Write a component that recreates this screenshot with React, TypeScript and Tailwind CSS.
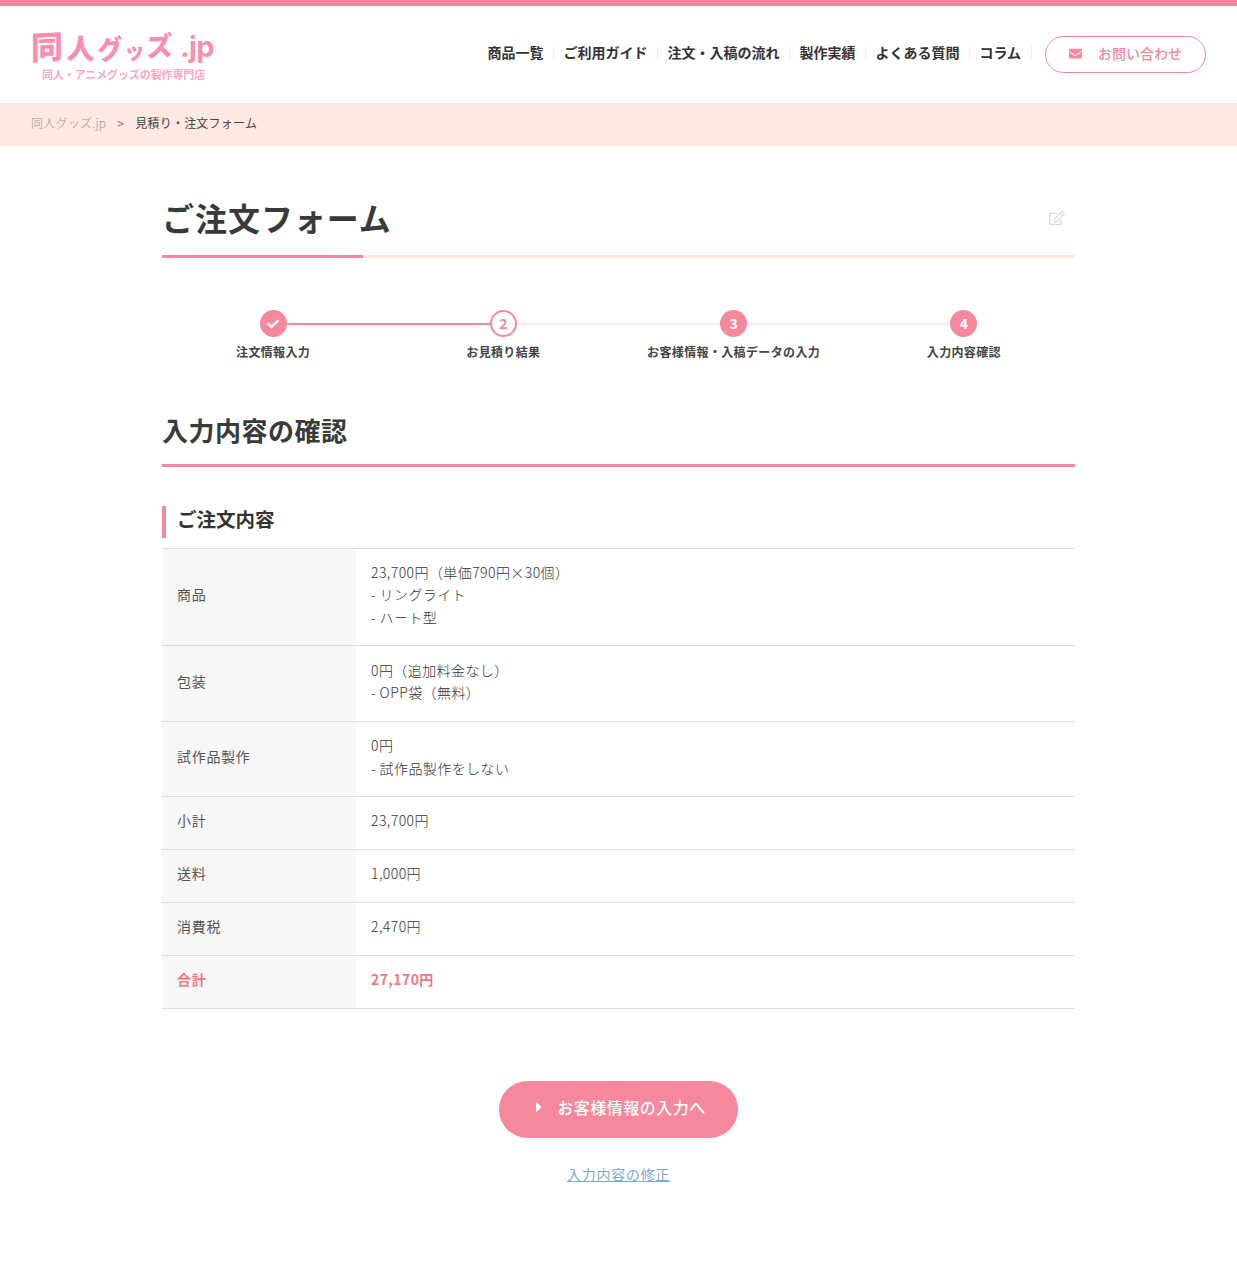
import { FaCheck, FaEnvelope, FaRegEdit, FaCaretRight } from "react-icons/fa";

const navItems = [
  "商品一覧",
  "ご利用ガイド",
  "注文・入稿の流れ",
  "製作実績",
  "よくある質問",
  "コラム",
];

const rows: { label: string; lines: string[]; h: string; total?: boolean }[] = [
  { label: "商品", lines: ["23,700円（単価790円×30個）", "- リングライト", "- ハート型"], h: "h-[97px]" },
  { label: "包装", lines: ["0円（追加料金なし）", "- OPP袋（無料）"], h: "h-[76px]" },
  { label: "試作品製作", lines: ["0円", "- 試作品製作をしない"], h: "h-[75px]" },
  { label: "小計", lines: ["23,700円"], h: "h-[53px]" },
  { label: "送料", lines: ["1,000円"], h: "h-[53px]" },
  { label: "消費税", lines: ["2,470円"], h: "h-[53px]" },
  { label: "合計", lines: ["27,170円"], h: "h-[53px]", total: true },
];

const steps = [
  { label: "注文情報入力", mark: "check" },
  { label: "お見積り結果", mark: "2" },
  { label: "お客様情報・入稿データの入力", mark: "3" },
  { label: "入力内容確認", mark: "4" },
];

const Logo = () => (
  <div className="w-[190px] -mt-[3px]">
    <div className="flex items-end h-[36px] text-[#f98eb0] font-black leading-none whitespace-nowrap">
      <span className="text-[32px] -rotate-3 -skew-x-3">同</span>
      <span className="text-[28px] ml-[4px] rotate-2">人</span>
      <span className="text-[26px] ml-[2px] -rotate-6">グ</span>
      <span className="text-[21px] ml-[1px] -rotate-6">ッ</span>
      <span className="text-[27px] ml-[1px] -translate-y-[3px] -rotate-3">ズ</span>
      <span className="text-[29px] ml-[7px] font-bold font-['Inter',sans-serif] tracking-tight">.jp</span>
    </div>
    <p className="mt-[6px] ml-[11px] text-[11px] leading-[14px] font-bold text-[#fba6c4] tracking-[-0.01em] whitespace-nowrap">
      同人・アニメグッズの製作専門店
    </p>
  </div>
);

export default function App() {
  return (
    <div className="min-h-[1280px] bg-white text-[#333] font-['Noto_Sans_CJK_JP','Noto_Sans',sans-serif]">
      <header className="h-[103px] border-t-[6px] border-[#f5889c] flex items-center justify-between pl-[31px] pr-[31px]">
        <Logo />
        <div className="flex items-center">
          <nav className="flex items-center">
            {navItems.map((item) => (
              <a
                key={item}
                className="pl-[9px] pr-[10px] h-[14px] flex items-center border-r border-[#eeeeee] -translate-y-[2px] text-[14px] font-bold text-[#333] whitespace-nowrap"
              >
                {item}
              </a>
            ))}
          </nav>
          <a className="ml-[13px] w-[161px] h-[37px] pb-[3px] rounded-full border border-[#f5889c] bg-white flex items-center justify-center gap-[16px] text-[14px] font-medium text-[#f5889c]">
            <FaEnvelope className="w-[13px] h-[13px]" />
            <span>お問い合わせ</span>
          </a>
        </div>
      </header>

      <div className="h-[43px] pb-[4px] bg-[#fde8e2] flex items-center pl-[31px] text-[12px] tracking-[0.02em]">
        <a className="text-[#999] font-light">同人グッズ.jp</a>
        <span className="mx-[11px] text-[#777]">&gt;</span>
        <span className="text-[#444]">見積り・注文フォーム</span>
      </div>

      <main className="w-[913px] mx-auto">
        <div className="relative mt-[50px] h-[65px] border-b-[3px] border-[#fde8e2]">
          <h1 className="-mt-[3px] text-[32px] leading-[48px] font-bold tracking-[0.03em] text-[#3a3a3a]">ご注文フォーム</h1>
          <FaRegEdit className="absolute right-[10px] top-[17px] w-[16px] h-[16px] text-[#dddddd]" />
          <span className="absolute left-0 bottom-[-3px] w-[201px] h-[3px] bg-[#f5889c]" />
        </div>

        <ol className="mt-[52px] -mx-[4px] grid grid-cols-4">
          {steps.map((step, i) => (
            <li key={step.label} className="relative flex flex-col items-center">
              {i < 3 && (
                <span
                  className={
                    i === 0
                      ? "absolute left-1/2 top-[13px] w-full h-[2px] bg-[#f5889c]"
                      : "absolute left-1/2 top-[13px] w-full h-[2px] bg-[#fde8ee]"
                  }
                />
              )}
              <span
                className={
                  step.mark === "2"
                    ? "relative w-[27px] h-[27px] rounded-full border-2 border-[#f5889c] bg-white text-[#f5889c] text-[14px] font-bold flex items-center justify-center"
                    : "relative w-[27px] h-[27px] rounded-full bg-[#f5889c] text-white text-[14px] font-bold flex items-center justify-center"
                }
              >
                {step.mark === "check" ? <FaCheck className="w-[12px] h-[12px]" /> : step.mark}
              </span>
              <span className="mt-[6px] text-[12px] leading-[18px] font-bold text-[#444] tracking-[0.03em] whitespace-nowrap">
                {step.label}
              </span>
            </li>
          ))}
        </ol>

        <h2 className="mt-[47px] h-[59px] pt-[2px] border-b-[3px] border-[#f5889c] text-[26px] leading-[39px] font-bold tracking-[0.02em] text-[#3a3a3a]">
          入力内容の確認
        </h2>

        <h3 className="mt-[39px] h-[32px] border-l-[4px] border-[#f5889c] pl-[11px] text-[19.5px] leading-[26px] font-bold text-[#333]">
          ご注文内容
        </h3>

        <div className="mt-[10px] border-t border-[#dddddd]">
          {rows.map((row) => (
            <div key={row.label} className={`flex border-b border-[#dddddd] ${row.h}`}>
              <div
                className={
                  row.total
                    ? "w-[194px] shrink-0 bg-[#f7f7f7] pl-[15px] pb-[5px] flex items-center text-[14px] tracking-[0.05em] font-bold text-[#f9747f]"
                    : "w-[194px] shrink-0 bg-[#f7f7f7] pl-[15px] pb-[5px] flex items-center text-[14px] tracking-[0.05em] text-[#555]"
                }
              >
                {row.label}
              </div>
              <div
                className={
                  row.total
                    ? "flex-1 pl-[15px] pb-[5px] flex flex-col justify-center text-[14px] leading-[22.4px] tracking-[0.03em] font-bold text-[#f9747f]"
                    : "flex-1 pl-[15px] pb-[5px] flex flex-col justify-center text-[14px] leading-[22.4px] tracking-[0.03em] font-light text-[#333]"
                }
              >
                {row.lines.map((line) => (
                  <p key={line}>{line}</p>
                ))}
              </div>
            </div>
          ))}
        </div>

        <div className="mt-[72px] flex flex-col items-center">
          <a className="w-[239px] h-[57px] pb-[5px] rounded-full bg-[#f5889c] text-white flex items-center justify-center gap-[10px] text-[16px] tracking-[0.03em] font-medium">
            <FaCaretRight className="w-[16px] h-[16px]" />
            <span>お客様情報の入力へ</span>
          </a>
          <a className="mt-[25px] text-[14px] leading-[22px] tracking-[0.05em] text-[#7aa9d3] underline">
            入力内容の修正
          </a>
        </div>
      </main>
    </div>
  );
}
